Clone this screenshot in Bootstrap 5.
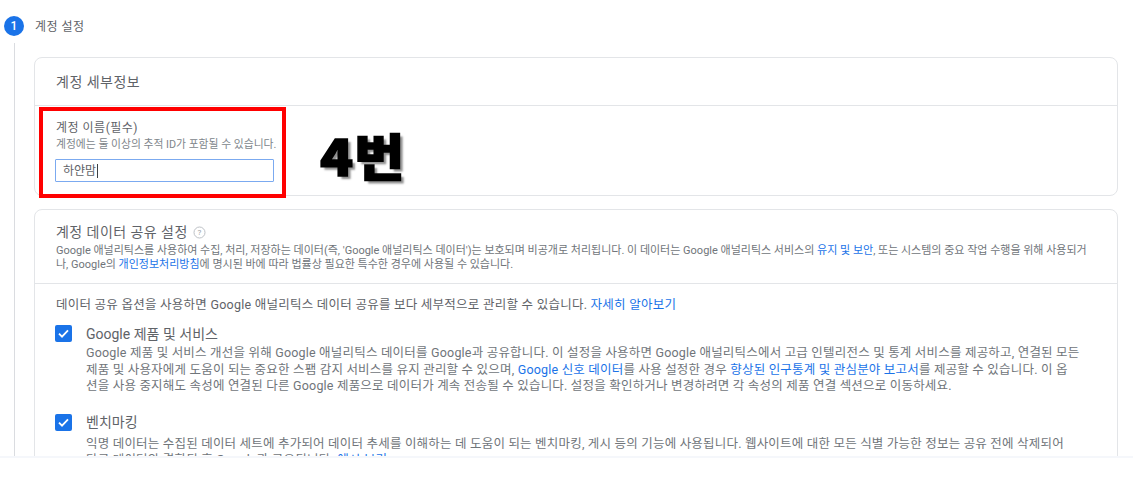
<!DOCTYPE html>
<html lang="ko">
  <head>
    <meta charset="UTF-8" />
    <meta name="viewport" content="width=device-width, initial-scale=1.0" />
    <title>계정 설정</title>
    <link href="https://cdn.jsdelivr.net/npm/bootstrap@5.3.2/dist/css/bootstrap.min.css" rel="stylesheet" />
    <style>
      body {
        background: #fff;
        color: #5f6368;
        font-family: Roboto, "Noto Sans CJK KR", sans-serif;
        overflow: hidden;
      }
      a { color: #1a73e8; text-decoration: none; }
      .ga-page {
        height: 456px;
        overflow: hidden;
        position: relative;
        border-bottom: 2px solid #f5f7fb;
        box-sizing: content-box;
      }
      .step-head { height: 43px; padding: 16px 0 0 4px; gap: 11px; }
      .step-num {
        width: 20px; height: 20px; border-radius: 50%;
        background: #1a73e8; color: #fff;
        font-size: 12px; font-weight: 500; line-height: 20px; text-align: center;
      }
      .step-title { font-size: 12px; line-height: 22px; color: #5f6368; letter-spacing: .5px; }
      .step-body { margin-left: 14px; border-left: 1px solid #dadce0; padding: 14px 15px 0 19px; }
      .ga-card { border: 1px solid #e3e5e8; border-radius: 8px; margin-bottom: 13px; }
      .ga-card-head { height: 48px; padding: 14px 21px 0; font-size: 14px; line-height: 20px; letter-spacing: .5px; border-bottom: 1px solid #e3e5e8; color: #5f6368; }
      .name-body { height: 89px; padding: 14px 21px 0; }
      .field-label { font-size: 12px; line-height: 16px; letter-spacing: .5px; color: #5f6368; }
      .field-hint { font-size: 10.8px; line-height: 14px; margin-top: 2px; color: #80868b; }
      .name-input {
        width: 219px; height: 23px; margin: 7px 0 0 -1px; padding: 1px 7px 0;
        font-size: 12px; line-height: 20px; color: #5f6368; border: 1px solid #7baaf0; border-radius: 1px;
      }
      .name-caret { border-right: 1px solid #3c4043; padding-right: 1px; }
      .share-head { padding: 14px 21px 12px; border-bottom: 1px solid #e3e5e8; }
      .share-title { font-size: 14px; line-height: 17px; letter-spacing: .45px; color: #5f6368; gap: 5px; }
      .share-note { font-size: 11px; line-height: 13.5px; margin-top: 3px; color: #70757a; }
      .share-body { padding: 12px 21px 0 20px; }
      .share-intro { font-size: 12.5px; line-height: 17px; letter-spacing: .25px; padding-left: 1px; }
      .opt-row { gap: 14px; }
      .opt-first { margin-top: 12px; }
      .opt-check {
        width: 17px; height: 17px; border-radius: 2px; background: #1a73e8; flex: none;
      }
      .opt-title { font-size: 14px; line-height: 18px; color: #5f6368; margin-bottom: 2px; }
      .opt-text { font-size: 12.5px; line-height: 16.5px; letter-spacing: .2px; color: #70757a; width: 1000px; }
      .opt-gap { margin-top: 19px; }
      .opt-gap .opt-title { margin-top: -1px; margin-bottom: 5px; }
      .red-frame { position: absolute; left: 39px; top: 107px; width: 247px; height: 91px; border: 4px solid #f00; }
      .big-label {
        position: absolute; left: 320px; top: 119px;
        font-family: "Noto Sans CJK KR", sans-serif; font-size: 50px; line-height: 70px; font-weight: 900;
        color: #000; letter-spacing: 1px;
        -webkit-text-stroke: 1.5px #000;
        text-shadow: 3px 3px 2px #8f8f8f;
        transform: scaleX(1.09);
        transform-origin: left center;
      }
    </style>
  </head>
  <body>
    <div class="ga-page">
      <div class="step-head d-flex align-items-start">
        <div class="step-num">1</div>
        <div class="step-title">계정 설정</div>
      </div>
      <div class="step-body">
        <div class="ga-card">
          <div class="ga-card-head">계정 세부정보</div>
          <div class="name-body">
            <div class="field-label">계정 이름(필수)</div>
            <div class="field-hint">계정에는 둘 이상의 추적 ID가 포함될 수 있습니다.</div>
            <div class="name-input"><span class="name-caret">하얀맘</span></div>
          </div>
        </div>
        <div class="ga-card">
          <div class="share-head">
            <div class="share-title d-flex align-items-center">
              <span>계정 데이터 공유 설정</span>
              <svg width="13" height="13" viewBox="0 0 13 13"><circle cx="6.5" cy="6.5" r="5.5" fill="none" stroke="#bdc1c6"/><text x="6.5" y="9.2" font-size="8" text-anchor="middle" fill="#9aa0a6">?</text></svg>
            </div>
            <div class="share-note">Google 애널리틱스를 사용하여 수집, 처리, 저장하는 데이터(즉, 'Google 애널리틱스 데이터')는 보호되며 비공개로 처리됩니다. 이 데이터는 Google 애널리틱스 서비스의 <a href="#">유지 및 보안</a>, 또는 시스템의 중요 작업 수행을 위해 사용되거<br />나, Google의 <a href="#">개인정보처리방침</a>에 명시된 바에 따라 법률상 필요한 특수한 경우에 사용될 수 있습니다.</div>
          </div>
          <div class="share-body">
            <div class="share-intro">데이터 공유 옵션을 사용하면 Google 애널리틱스 데이터 공유를 보다 세부적으로 관리할 수 있습니다. <a href="#">자세히 알아보기</a></div>
            <div class="opt-row opt-first d-flex">
              <svg class="opt-check" viewBox="0 0 17 17"><path d="M4 8.6l3 3 6-6.2" fill="none" stroke="#fff" stroke-width="1.8"/></svg>
              <div>
                <div class="opt-title">Google 제품 및 서비스</div>
                <div class="opt-text">Google 제품 및 서비스 개선을 위해 Google 애널리틱스 데이터를 Google과 공유합니다. 이 설정을 사용하면 Google 애널리틱스에서 고급 인텔리전스 및 통계 서비스를 제공하고, 연결된 모든<br />제품 및 사용자에게 도움이 되는 중요한 스팸 감지 서비스를 유지 관리할 수 있으며, <a href="#">Google 신호 데이터</a>를 사용 설정한 경우 <a href="#">향상된 인구통계 및 관심분야 보고서</a>를 제공할 수 있습니다. 이 옵<br />션을 사용 중지해도 속성에 연결된 다른 Google 제품으로 데이터가 계속 전송될 수 있습니다. 설정을 확인하거나 변경하려면 각 속성의 제품 연결 섹션으로 이동하세요.</div>
              </div>
            </div>
            <div class="opt-row opt-gap d-flex">
              <svg class="opt-check" viewBox="0 0 17 17"><path d="M4 8.6l3 3 6-6.2" fill="none" stroke="#fff" stroke-width="1.8"/></svg>
              <div>
                <div class="opt-title">벤치마킹</div>
                <div class="opt-text">익명 데이터는 수집된 데이터 세트에 추가되어 데이터 추세를 이해하는 데 도움이 되는 벤치마킹, 게시 등의 기능에 사용됩니다. 웹사이트에 대한 모든 식별 가능한 정보는 공유 전에 삭제되어<br />다른 데이터와 결합된 후 Google과 공유됩니다. <a href="#">예시 보기</a></div>
              </div>
            </div>
          </div>
        </div>
      </div>
      <div class="red-frame"></div>
      <div class="big-label">4번</div>
    </div>
    <script src="https://cdn.jsdelivr.net/npm/bootstrap@5.3.2/dist/js/bootstrap.bundle.min.js"></script>
  </body>
</html>
